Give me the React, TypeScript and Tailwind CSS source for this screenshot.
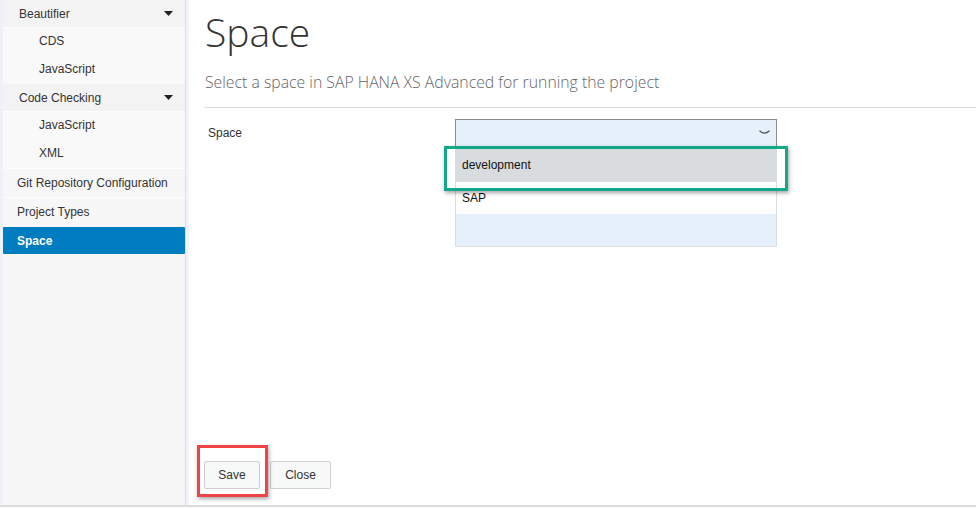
import React from 'react';

const navItems: { label: string; level: 'group' | 'sub' | 'top'; active?: boolean }[] = [
  { label: 'Beautifier', level: 'group' },
  { label: 'CDS', level: 'sub' },
  { label: 'JavaScript', level: 'sub' },
  { label: 'Code Checking', level: 'group' },
  { label: 'JavaScript', level: 'sub' },
  { label: 'XML', level: 'sub' },
  { label: 'Git Repository Configuration', level: 'top' },
  { label: 'Project Types', level: 'top' },
  { label: 'Space', level: 'top', active: true },
];

const Caret = () => (
  <svg width="9" height="5" viewBox="0 0 9 5" className="fill-[#222]">
    <polygon points="0,0 9,0 4.5,5" />
  </svg>
);

const Sidebar = () => (
  <aside className="w-[186px] flex-shrink-0 bg-[#eef2f8] pl-[3px] flex">
    <div className="flex-1 bg-[#f7f7f7] border-r border-[#dcdde2] flex flex-col">
      {navItems.map((item, i) => {
        if (item.active) {
          return (
            <div key={i} className="h-[27px] mt-px flex items-center pl-[14px] bg-[#007cc0] text-white font-bold text-[12px] rounded-[1px]">
              {item.label}
            </div>
          );
        }
        if (item.level === 'group') {
          return (
            <div key={i} className="h-[28px] flex items-center justify-between pl-[16px] pr-[12px] bg-[#f3f3f3] border-b border-[#fdfdfd] text-[12px] text-[#333]">
              <span>{item.label}</span>
              <Caret />
            </div>
          );
        }
        if (item.level === 'sub') {
          return (
            <div key={i} className="h-[28px] flex items-center pl-[36px] pb-[2px] bg-[#f9f9f9] text-[12px] text-[#333]">
              {item.label}
            </div>
          );
        }
        return (
          <div key={i} className="h-[29px] flex items-center pl-[14px] border-t border-[#fdfdfd] text-[12px] text-[#333]">
            {item.label}
          </div>
        );
      })}
    </div>
  </aside>
);

const Chevron = () => (
  <svg width="11" height="6" viewBox="0 0 11 6" fill="none" className="stroke-[#555]">
    <path d="M0.5 0.8 Q5.5 5.5 10.5 0.8" strokeWidth="1.3" />
  </svg>
);

export default function App() {
  return (
    <div className="h-[508px] bg-white" style={{ fontFamily: '"Liberation Sans", Arial, sans-serif' }}>
      <div className="h-[507px] flex border-b-2 border-[#dcdcdc]">
        <Sidebar />
        <div className="w-[3px] bg-[#f1f4f9]" />
        <main className="flex-1 flex flex-col pl-[15px] pb-[16px]">
          <h1 className="text-[39px] font-light text-[#333] leading-none mt-[12px] ml-[1px]" style={{ fontFamily: '"Open Sans", sans-serif' }}>
            Space
          </h1>
          <p className="text-[15.8px] font-light text-[#666] mt-[20px] ml-[1px]" style={{ fontFamily: '"Open Sans", sans-serif' }}>
            Select a space in SAP HANA XS Advanced for running the project
          </p>
          <hr className="mt-[12px] border-t border-[#dcdcdc]" />

          <div className="flex-1 flex items-start mt-[11px]">
            <label className="w-[251px] pl-[4px] pt-[5px] text-[12px] text-[#333]">Space</label>
            <div className="relative w-[322px]">
              <div className="h-[27px] bg-[#e5f0fa] border border-b-0 border-[#8a8a8a] flex items-center justify-end pr-[6px]">
                <Chevron />
              </div>
              <ul className="absolute left-0 right-0 top-[27px] border border-[#dedede] border-t-0 text-[12px] text-[#111]">
                <li className="h-[36px] bg-[#d9dcdf] flex items-center pl-[6px] pt-[2px]">development</li>
                <li className="h-[32px] bg-white flex items-center pl-[6px]">SAP</li>
                <li className="h-[32px] bg-[#e5f0fa]" />
              </ul>
              <div className="absolute -left-[11px] -right-[11px] top-[27px] h-[45px] border-[3px] border-[#13a88a] shadow-[1px_2px_4px_rgba(0,0,0,0.35)]" />
            </div>
          </div>

          <div className="relative flex gap-[10px]">
            <button className="w-[56px] h-[28px] bg-[#f7f8f8] border border-[#cfcfcf] rounded-[2px] text-[12px] text-[#333]">Save</button>
            <button className="w-[61px] h-[28px] bg-[#f7f8f8] border border-[#cfcfcf] rounded-[2px] text-[12px] text-[#333]">Close</button>
            <div className="absolute -left-[7px] -top-[16px] w-[71px] h-[52px] border-[3px] border-[#ee4446] shadow-[1px_2px_4px_rgba(0,0,0,0.35)]" />
          </div>
        </main>
      </div>
    </div>
  );
}
